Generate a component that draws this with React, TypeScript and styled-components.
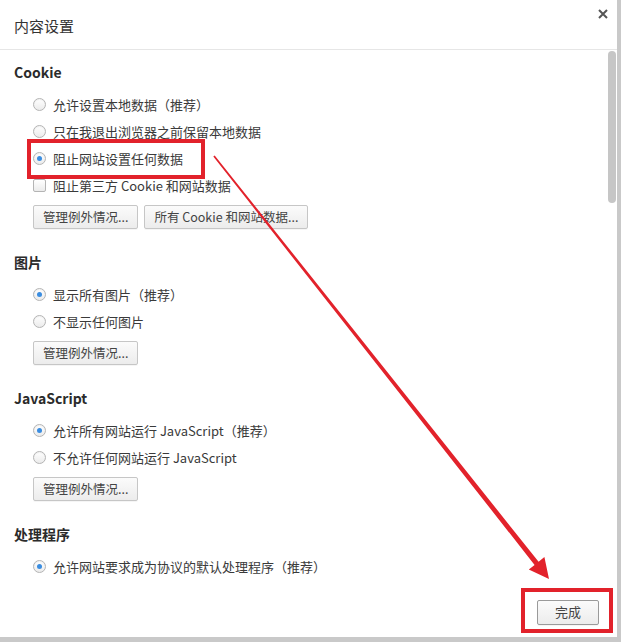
import styled, { createGlobalStyle } from 'styled-components';

const GlobalStyle = createGlobalStyle`
  html, body {
    margin: 0;
    padding: 0;
    background: #ffffff;
  }
  body {
    font-family: "Noto Sans CJK SC", "Noto Sans", sans-serif;
    color: #333333;
  }
`;

const Page = styled.div`
  position: relative;
  width: 621px;
  height: 642px;
  overflow: hidden;
  background: #c9c9c9;
`;

const Dialog = styled.div`
  width: 617px;
  height: 637px;
  background: #ffffff;
  display: flex;
  flex-direction: column;
`;

const Header = styled.div`
  height: 49px;
  border-bottom: 1px solid #e6e6e6;
  display: flex;
  align-items: flex-start;
  justify-content: space-between;
  padding: 0 0 0 14px;
  box-sizing: content-box;
`;

const Title = styled.div`
  margin-top: 15px;
  font-size: 15px;
  line-height: 22px;
  color: #333333;
`;

const CloseButton = styled.div`
  width: 12px;
  height: 12px;
  margin: 8px 8px 0 0;
  display: flex;
  align-items: center;
  justify-content: center;
`;

const Body = styled.div`
  height: 540px;
  display: flex;
`;

const Content = styled.div`
  flex: 1;
  padding: 12px 0 0 14px;
  display: flex;
  flex-direction: column;
  gap: 23px;
`;

const ScrollTrack = styled.div`
  width: 9px;
  padding-top: 1px;
`;

const ScrollThumb = styled.div`
  width: 8px;
  height: 152px;
  border-radius: 4px;
  background: #c6c6c6;
`;

const Section = styled.div`
  display: flex;
  flex-direction: column;
`;

const SectionTitle = styled.div`
  font-size: 14px;
  font-weight: 700;
  line-height: 20px;
  color: #2b2b2b;
  margin-bottom: 9px;
`;

const Options = styled.div`
  padding-left: 19px;
  display: flex;
  flex-direction: column;
`;

const OptionRow = styled.div`
  height: 27px;
  display: flex;
  align-items: center;
  gap: 7px;
  font-size: 13px;
  color: #3a3a3a;
`;

const Radio = styled.span<{ $checked?: boolean }>`
  width: 13px;
  height: 13px;
  box-sizing: border-box;
  border-radius: 50%;
  border: 1px solid #b4b4b4;
  background: linear-gradient(#ffffff, #ebebeb);
  box-shadow: inset 0 1px 1px rgba(0, 0, 0, 0.06);
  display: flex;
  align-items: center;
  justify-content: center;
  &::after {
    content: '';
    display: ${(p) => (p.$checked ? 'block' : 'none')};
    width: 5px;
    height: 5px;
    border-radius: 50%;
    background: #3b8de0;
  }
`;

const Checkbox = styled.span`
  width: 13px;
  height: 13px;
  box-sizing: border-box;
  border-radius: 2px;
  border: 1px solid #b4b4b4;
  background: linear-gradient(#ffffff, #ebebeb);
`;

const ButtonRow = styled.div`
  display: flex;
  gap: 6px;
  margin-top: 6px;
`;

const Button = styled.div`
  height: 24px;
  box-sizing: border-box;
  padding: 0 9px;
  border: 1px solid #c6c6c6;
  border-radius: 2px;
  background: linear-gradient(#fbfbfb, #ececec);
  box-shadow: 0 1px 0 rgba(0, 0, 0, 0.04);
  font-size: 12.5px;
  line-height: 22px;
  color: #444444;
  white-space: nowrap;
`;

const Footer = styled.div`
  flex: 1;
  display: flex;
  justify-content: flex-end;
  align-items: flex-start;
  padding: 10px 18px 0 0;
`;

const DoneButton = styled(Button)`
  width: 62px;
  height: 25px;
  text-align: center;
  padding: 0;
  font-size: 13px;
  border-color: #9a9a9a;
`;

const Annotations = styled.svg`
  position: absolute;
  left: 0;
  top: 0;
  pointer-events: none;
`;

const RED = '#e2222b';

type Option = { label: string; checked?: boolean; kind?: 'radio' | 'check' };

const OptionList = ({ items }: { items: Option[] }) => (
  <Options>
    {items.map((o) => (
      <OptionRow key={o.label}>
        {o.kind === 'check' ? <Checkbox /> : <Radio $checked={o.checked} />}
        <span>{o.label}</span>
      </OptionRow>
    ))}
  </Options>
);

const App = () => {
  return (
    <Page>
      <GlobalStyle />
      <Dialog>
        <Header>
          <Title>内容设置</Title>
          <CloseButton>
            <svg width="10" height="10" viewBox="0 0 10 10">
              <path d="M1 1 L9 9 M9 1 L1 9" stroke="#555" strokeWidth="2" />
            </svg>
          </CloseButton>
        </Header>
        <Body>
          <Content>
            <Section>
              <SectionTitle>Cookie</SectionTitle>
              <OptionList
                items={[
                  { label: '允许设置本地数据（推荐）' },
                  { label: '只在我退出浏览器之前保留本地数据' },
                  { label: '阻止网站设置任何数据', checked: true },
                  { label: '阻止第三方 Cookie 和网站数据', kind: 'check' },
                ]}
              />
              <Options>
                <ButtonRow>
                  <Button>管理例外情况...</Button>
                  <Button>所有 Cookie 和网站数据...</Button>
                </ButtonRow>
              </Options>
            </Section>
            <Section>
              <SectionTitle>图片</SectionTitle>
              <OptionList
                items={[{ label: '显示所有图片（推荐）', checked: true }, { label: '不显示任何图片' }]}
              />
              <Options>
                <ButtonRow>
                  <Button>管理例外情况...</Button>
                </ButtonRow>
              </Options>
            </Section>
            <Section>
              <SectionTitle>JavaScript</SectionTitle>
              <OptionList
                items={[
                  { label: '允许所有网站运行 JavaScript（推荐）', checked: true },
                  { label: '不允许任何网站运行 JavaScript' },
                ]}
              />
              <Options>
                <ButtonRow>
                  <Button>管理例外情况...</Button>
                </ButtonRow>
              </Options>
            </Section>
            <Section>
              <SectionTitle>处理程序</SectionTitle>
              <OptionList items={[{ label: '允许网站要求成为协议的默认处理程序（推荐）', checked: true }]} />
            </Section>
          </Content>
          <ScrollTrack>
            <ScrollThumb />
          </ScrollTrack>
        </Body>
        <Footer>
          <DoneButton>完成</DoneButton>
        </Footer>
      </Dialog>
      <Annotations width="621" height="642" viewBox="0 0 621 642">
        <rect x="29" y="141" width="174" height="36" fill="none" stroke={RED} strokeWidth="4" />
        <rect x="523" y="590" width="88" height="41" fill="none" stroke={RED} strokeWidth="4" />
        <polygon
          points="213.3,156.6 534.6,564.9 528.8,569.5 549,579 544.4,557.1 538.6,561.8 214.7,155.4"
          fill={RED}
        />
      </Annotations>
    </Page>
  );
};

export default App;
